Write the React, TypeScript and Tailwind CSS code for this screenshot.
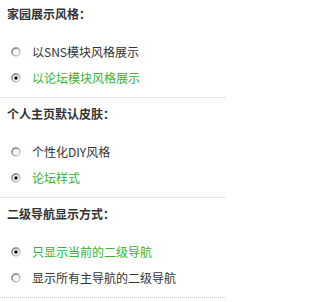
const sections = [
  {
    title: '家园展示风格：',
    options: ['以SNS模块风格展示', '以论坛模块风格展示'],
    selected: 1,
  },
  {
    title: '个人主页默认皮肤：',
    options: ['个性化DIY风格', '论坛样式'],
    selected: 1,
  },
  {
    title: '二级导航显示方式：',
    options: ['只显示当前的二级导航', '显示所有主导航的二级导航'],
    selected: 0,
  },
]

function Radio({ checked }: { checked: boolean }) {
  return (
    <svg width="10" height="10" viewBox="0 0 10 10" className="shrink-0">
      <defs>
        <linearGradient id="rg" x1="0" y1="0" x2="1" y2="1">
          <stop offset="0" stopColor="#5e5e5e" />
          <stop offset="0.5" stopColor="#a0a0a0" />
          <stop offset="1" stopColor="#e0e0e0" />
        </linearGradient>
      </defs>
      <circle cx="5" cy="5" r="4" fill="#f7f7f7" stroke="url(#rg)" strokeWidth="1.4" />
      {checked && <circle cx="5" cy="5" r="1.7" fill="#000" />}
    </svg>
  )
}

export default function App() {
  return (
    <div className="w-[225px] h-[302px] bg-white overflow-hidden font-['Noto_Sans_CJK_SC','Noto_Sans',sans-serif]">
      {sections.map((s, i) => (
        <div
          key={s.title}
          className={`border-b border-dotted border-[#cfcfcf] pb-[6px] ${i === 0 ? 'pt-[6px]' : 'pt-[8px]'}`}
        >
          <h2 className="pl-[7px] text-[12px] leading-[16px] font-bold text-[#333]">{s.title}</h2>
          <div className="mt-[17px]">
            {s.options.map((opt, j) => (
              <label key={opt} className="flex items-center h-[26px] pl-[11px] gap-[11px]">
                <Radio checked={j === s.selected} />
                <span className={`text-[12px] leading-[16px] ${j === s.selected ? 'text-[#33b533]' : 'text-[#333]'}`}>
                  {opt}
                </span>
              </label>
            ))}
          </div>
        </div>
      ))}
    </div>
  )
}
